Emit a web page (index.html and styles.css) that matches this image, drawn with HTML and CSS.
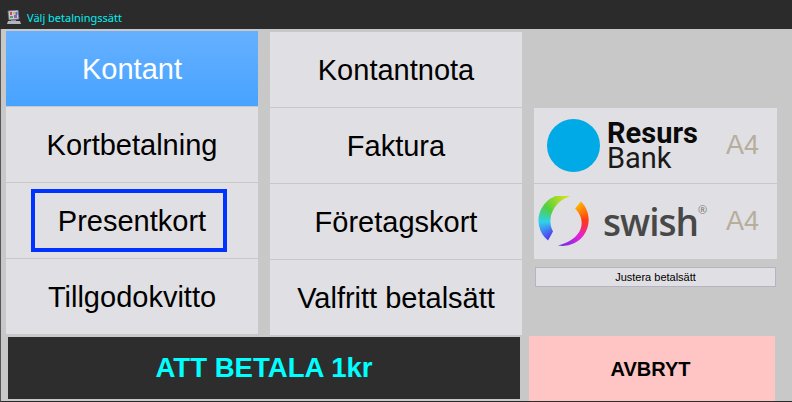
FILE: index.html
```html
<!DOCTYPE html>
<html lang="sv">
<head>
<meta charset="UTF-8" />
<meta name="viewport" content="width=device-width, initial-scale=1" />
<title>Välj betalningssätt</title>
<link rel="stylesheet" href="styles.css">
</head>
<body>

<div class="window">
  <header class="titlebar">
    <svg class="app-icon" width="14" height="15" viewBox="0 0 14 15">
      <path d="M1 1 L11 0 L12 9 L2 10 Z" fill="#c9ccd8" stroke="#6f7280" stroke-width="0.8" />
      <rect x="3" y="2" width="2" height="3" fill="#d04a4a" />
      <rect x="6" y="2" width="2" height="2" fill="#e0b030" />
      <rect x="8.5" y="2" width="2" height="3" fill="#4a70d0" />
      <rect x="3" y="6" width="3" height="2" fill="#50a060" />
      <rect x="7" y="5" width="3" height="3" fill="#9060c0" />
      <rect x="4" y="10" width="5" height="1" fill="#8a8a94" />
      <path d="M1 11 H13 L14 14 H0 Z" fill="#b4b4bc" />
    </svg>
    <span class="title-text">Välj betalningssätt</span>
  </header>

  <main class="panels">
    <section class="col col-left">
      <button class="pay pay-active">Kontant</button>
      <button class="pay">Kortbetalning</button>
      <button class="pay"><span class="focus-box">Presentkort</span></button>
      <button class="pay">Tillgodokvitto</button>
    </section>

    <section class="col col-mid">
      <button class="pay">Kontantnota</button>
      <button class="pay">Faktura</button>
      <button class="pay">Företagskort</button>
      <button class="pay">Valfritt betalsätt</button>
    </section>

    <section class="col-right">
      <button class="brand brand-resurs">
        <span class="resurs-dot"></span>
        <span class="resurs-name">
          <span class="resurs-top">Resurs</span>
          <span class="resurs-bottom">Bank</span>
        </span>
        <span class="a4">A4</span>
      </button>
      <button class="brand brand-swish">
        <span class="swish-ring"></span>
        <span class="swish-name">swish<sup class="swish-reg">®</sup></span>
        <span class="a4">A4</span>
      </button>
      <button class="adjust">Justera betalsätt</button>
    </section>
  </main>

  <footer class="bottom">
    <div class="total">ATT BETALA 1kr</div>
    <button class="cancel">AVBRYT</button>
  </footer>
</div>

</body>
</html>
```

FILE: styles.css
```css
* {
  box-sizing: border-box;
}
html, body {
  margin: 0;
  padding: 0;
  background: #c8c8c8;
}
body {
  width: 792px;
  height: 402px;
  overflow: hidden;
  font-family: 'Liberation Sans', Arial, sans-serif;
}
button {
  font-family: inherit;
  border: 0;
  padding: 0;
  margin: 0;
  color: #000;
}
.window {
  width: 792px;
  height: 402px;
  background: #c8c8c8;
  border-left: 1px solid #555;
  border-bottom: 1px solid #2b2b2b;
}
.titlebar {
  height: 29px;
  margin-left: -1px;
  padding: 9px 0 0 7px;
  background: #2b2b2b;
  display: flex;
  align-items: flex-start;
  gap: 6px;
}
.app-icon {
  flex: none;
  margin-top: 1px;
}
.title-text {
  color: #00f0f0;
  font-family: 'Noto Sans', sans-serif;
  font-size: 11px;
  line-height: 17px;
}
.panels {
  height: 306px;
  display: flex;
  align-items: flex-start;
}
.col {
  width: 252px;
  display: flex;
  flex-direction: column;
  gap: 1px;
}
.col-left {
  margin: 2px 0 0 5px;
}
.col-mid {
  margin: 3px 0 0 12px;
}
.pay {
  height: 75px;
  padding-top: 2px;
  background: #e0dfe3;
  font-size: 29px;
  display: flex;
  align-items: center;
  justify-content: center;
}
.pay-active {
  background: linear-gradient(#66b0ff, #47a3ff);
  color: #fff;
}
.focus-box {
  width: 196px;
  height: 63px;
  margin: -2px 6px 0 0;
  padding: 2px 0 0 6px;
  border: 4px solid #0033ff;
  display: flex;
  align-items: center;
  justify-content: center;
}
.col-right {
  width: 243px;
  margin: 79px 0 0 12px;
  display: flex;
  flex-direction: column;
  gap: 1px;
}
.brand {
  height: 75px;
  background: #e0dfe3;
  display: flex;
  align-items: center;
  position: relative;
}
.resurs-dot {
  width: 53px;
  height: 53px;
  margin-left: 13px;
  border-radius: 50%;
  background: #00aae7;
  flex: none;
}
.resurs-name {
  margin-left: 7px;
  display: flex;
  flex-direction: column;
  font-family: Roboto, sans-serif;
  font-size: 29px;
  text-align: left;
  line-height: 25px;
}
.resurs-top {
  font-weight: 700;
  color: #0a0a0a;
}
.resurs-bottom {
  color: #1a1a1a;
}
.a4 {
  position: absolute;
  left: 192px;
  top: 20px;
  font-size: 27px;
  line-height: 34px;
  color: #b5ae9c;
}
.swish-ring {
  width: 52px;
  height: 52px;
  margin-left: 4px;
  flex: none;
  background: conic-gradient(#c8e020 0deg, #ffc800 30deg, #ff3a10 85deg, #e020e0 135deg, #7030e0 185deg, #5040f0 225deg, #30d0f0 270deg, #50d040 310deg, #c8e020 360deg);
  clip-path: path('M34 0 A26 26 0 0 0 10 45 L15 36 C8 22 16 5 34 0 Z M37 13 L43 6 A26 26 0 0 1 20 50 C44 44 50 26 37 13 Z');
}
.swish-name {
  margin-left: 13px;
  font-family: 'Open Sans', sans-serif;
  font-size: 37px;
  font-weight: 600;
  line-height: 40px;
  color: #484848;
  letter-spacing: -1px;
}
.swish-reg {
  font-size: 11px;
  font-weight: 400;
  vertical-align: 22px;
  line-height: 0;
  letter-spacing: 0;
  color: #777;
}
.adjust {
  height: 20px;
  margin: 7px 1px 0 1px;
  background: #e0dfe3;
  border: 1px solid #b4b4c4;
  font-size: 11px;
}
.bottom {
  height: 66px;
  margin-top: 1px;
  display: flex;
  align-items: flex-start;
}
.total {
  width: 512px;
  height: 62px;
  margin: 1px 0 0 7px;
  background: #2d2d2d;
  color: #00ffff;
  font-size: 27.6px;
  font-weight: 700;
  display: flex;
  align-items: center;
  justify-content: center;
}
.cancel {
  width: 246px;
  height: 65px;
  margin-left: 9px;
  padding: 1px 3px 0 0;
  background: #ffc4c4;
  font-size: 20px;
  font-weight: 700;
}
```
